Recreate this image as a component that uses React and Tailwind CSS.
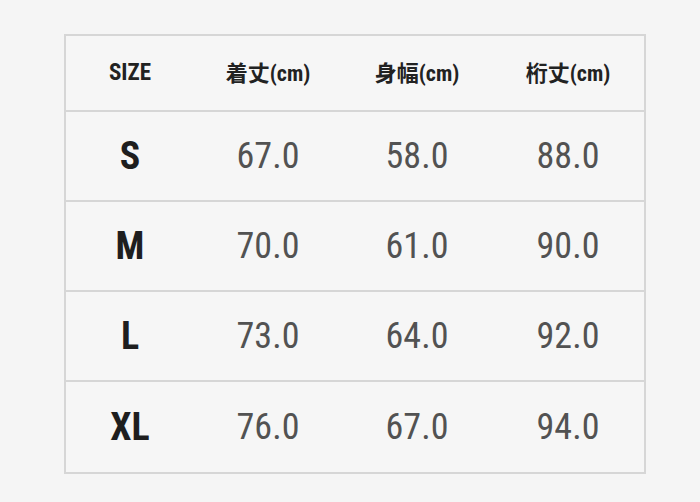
const headers = ["SIZE", "着丈(cm)", "身幅(cm)", "桁丈(cm)"];

const rows = [
  { size: "S", values: ["67.0", "58.0", "88.0"] },
  { size: "M", values: ["70.0", "61.0", "90.0"] },
  { size: "L", values: ["73.0", "64.0", "92.0"] },
  { size: "XL", values: ["76.0", "67.0", "94.0"] },
];

const cols = "grid grid-cols-[128px_148px_150px_1fr]";

export default function App() {
  return (
    <div
      className="w-[700px] h-[502px] bg-[#f5f5f5] pt-[34px] pl-[64px]"
      style={{ fontFamily: "Roboto, 'Noto Sans CJK JP', sans-serif" }}
    >
      <div className="w-[582px] border-2 border-[#d6d6d6] bg-[#f6f6f6] [font-stretch:82%]">
        {/* 見出し */}
        <div className={`${cols} h-[76px] items-center text-center border-b-2 border-[#d6d6d6]`}>
          <span className="text-[23px] font-bold text-[#222]">{headers[0]}</span>
          {headers.slice(1).map((h) => (
            <span key={h} className="text-[22px] font-bold text-[#222]">
              {h}
            </span>
          ))}
        </div>

        {rows.map((r, i) => (
          <div
            key={r.size}
            className={`${cols} h-[90px] items-center text-center ${
              i < rows.length - 1 ? "border-b-2 border-[#d6d6d6]" : ""
            }`}
          >
            <span className="text-[38px] font-bold text-[#1e1e1e]">{r.size}</span>
            {r.values.map((v, j) => (
              <span key={j} className="text-[36px] text-[#525252]">
                {v}
              </span>
            ))}
          </div>
        ))}
      </div>
    </div>
  );
}
